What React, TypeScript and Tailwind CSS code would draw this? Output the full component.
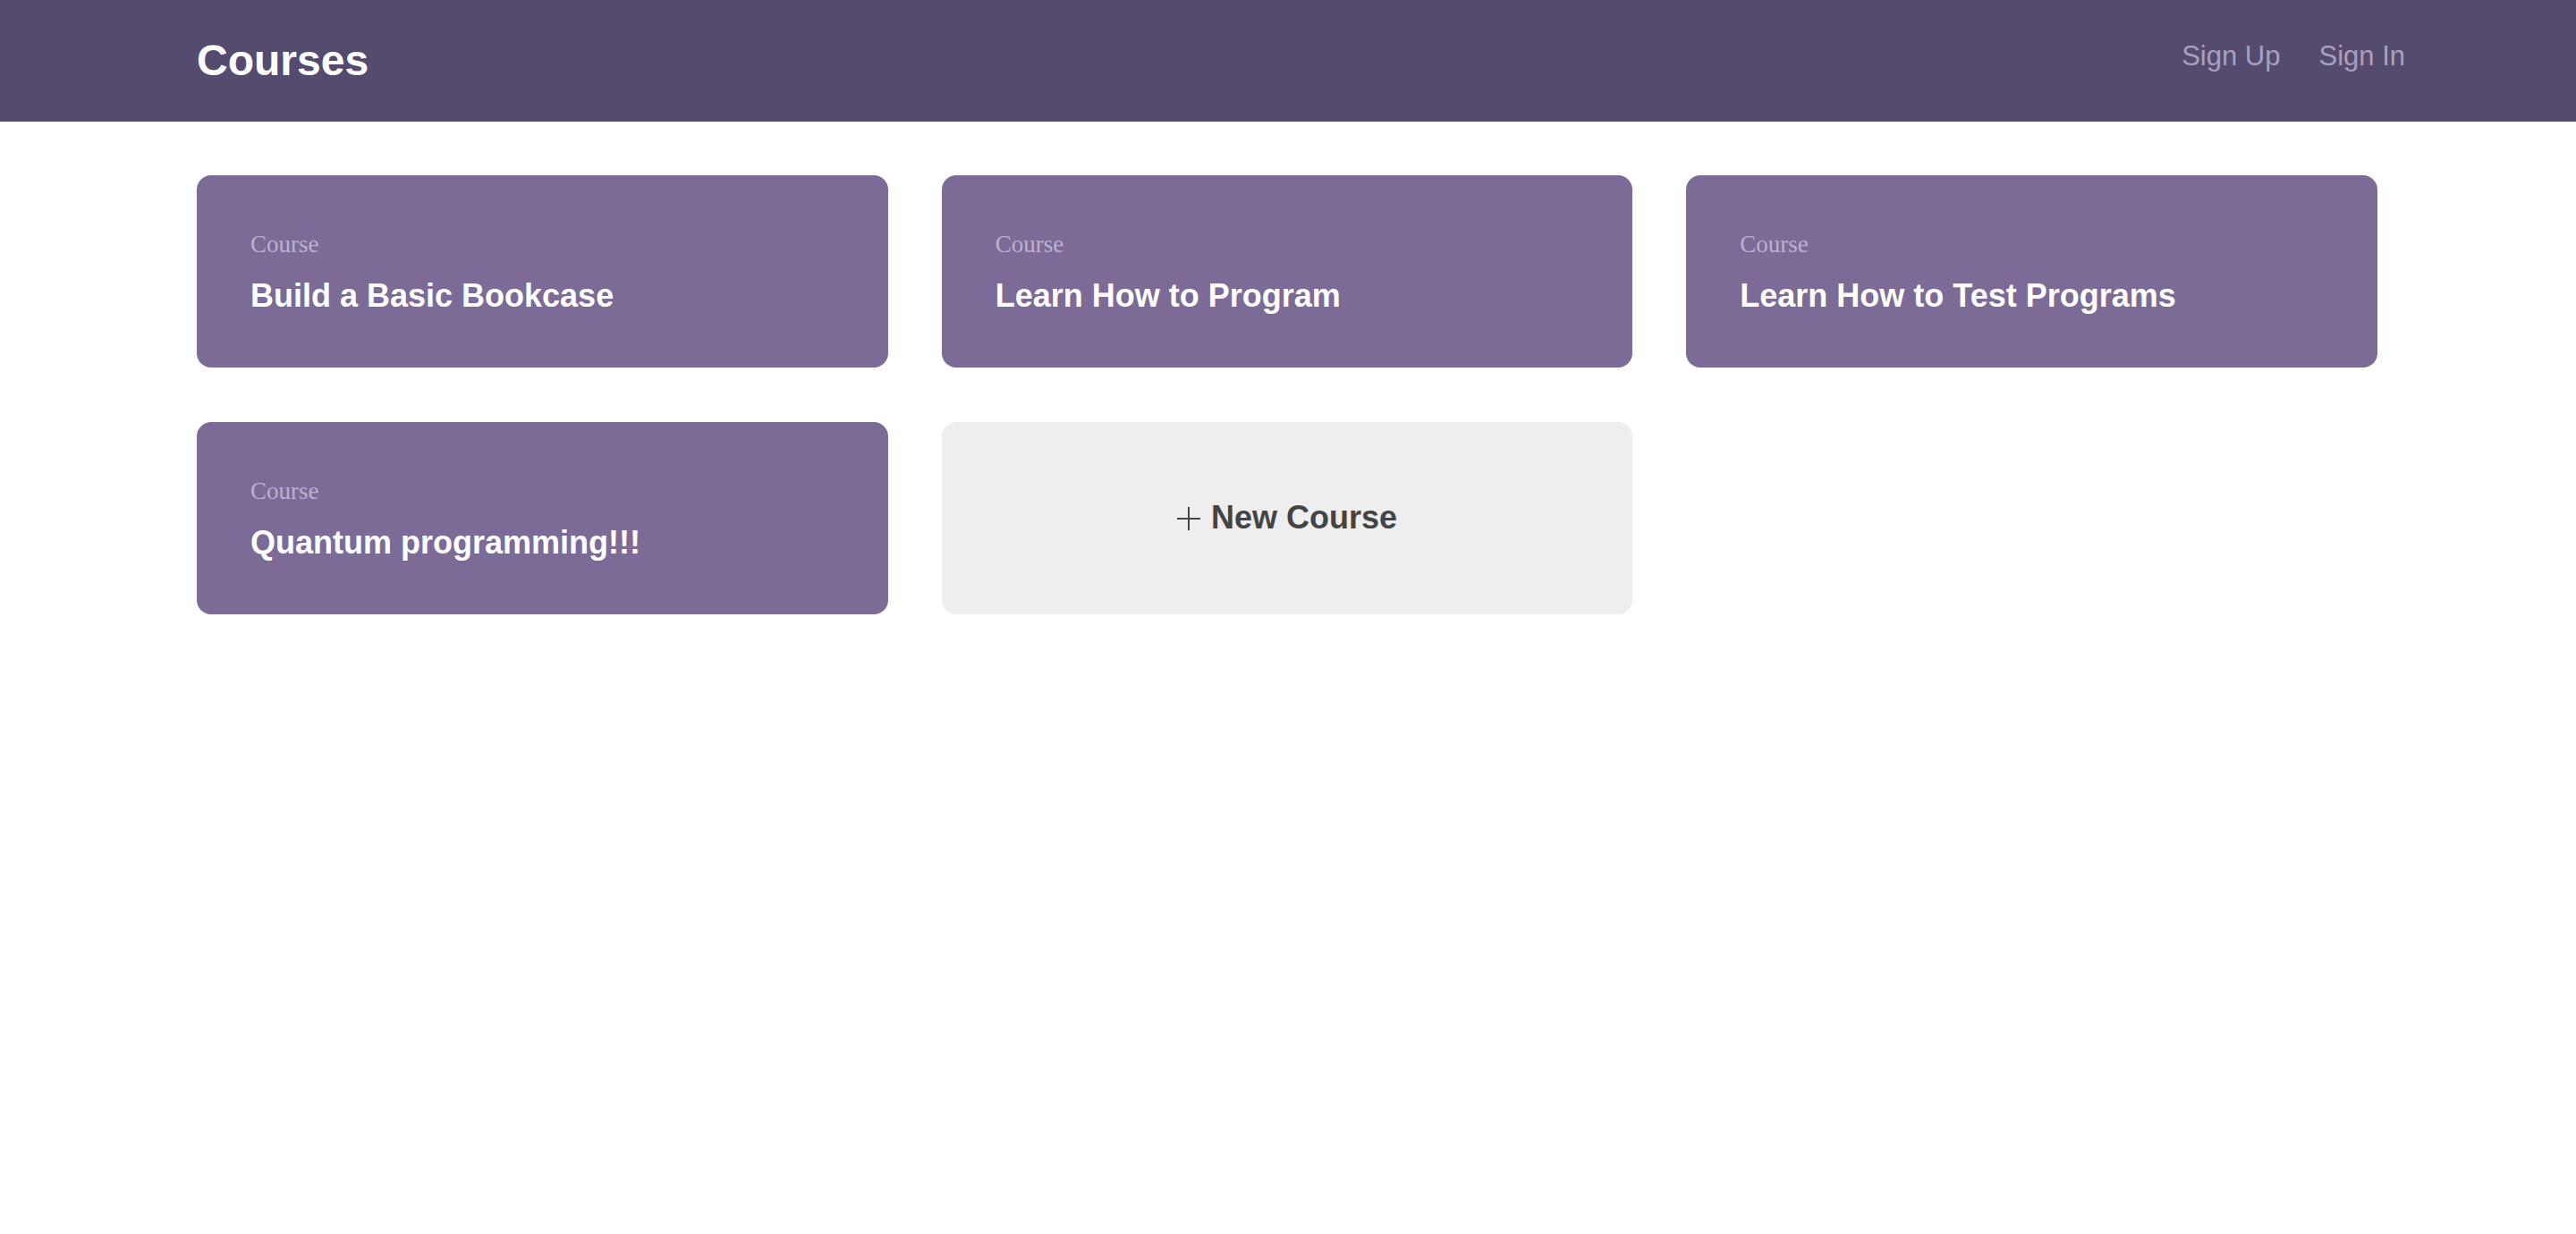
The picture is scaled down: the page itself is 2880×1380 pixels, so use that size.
import React from 'react';

const courses = ['Build a Basic Bookcase', 'Learn How to Program', 'Learn How to Test Programs', 'Quantum programming!!!'];

const App: React.FC = () => {
  return (
    <div className="min-h-screen bg-white font-['Liberation_Sans',Arial,sans-serif]">
      <header className="h-[136px] bg-[#554b6e] flex items-center justify-between pl-[220px] pr-[191px]">
        <h1 className="text-[48px] leading-[48px] font-bold text-white">Courses</h1>
        <nav className="flex gap-[43px] pb-[10px] text-[31px] leading-[32px] text-[#a9a0bf]">
          <a href="#">Sign Up</a>
          <a href="#">Sign In</a>
        </nav>
      </header>

      <main className="ml-[220px] mr-[222px] mt-[60px] grid grid-cols-3 gap-x-[60px] gap-y-[61px]">
        {courses.map((title) => (
          <a key={title} href="#" className="block rounded-2xl bg-[#7b6b96] px-[60px] pt-[62px] pb-[59px]">
            <div className="font-['Liberation_Serif','Times_New_Roman',serif] text-[27px] leading-[31px] text-[#bcb1cf]">
              Course
            </div>
            <div className="mt-[20px] text-[36px] leading-[43px] font-bold text-white">{title}</div>
          </a>
        ))}
        <a href="#" className="flex items-center justify-center gap-[12px] rounded-2xl bg-[#eeeeee] pb-[2px] text-[#444444]">
          <svg width="26" height="26" viewBox="0 0 26 26" className="mt-[2px]">
            <path d="M13 0v26M0 13h26" stroke="#444444" strokeWidth="2" />
          </svg>
          <span className="text-[36px] leading-[43px] font-bold">New Course</span>
        </a>
      </main>
    </div>
  );
};

export default App;
